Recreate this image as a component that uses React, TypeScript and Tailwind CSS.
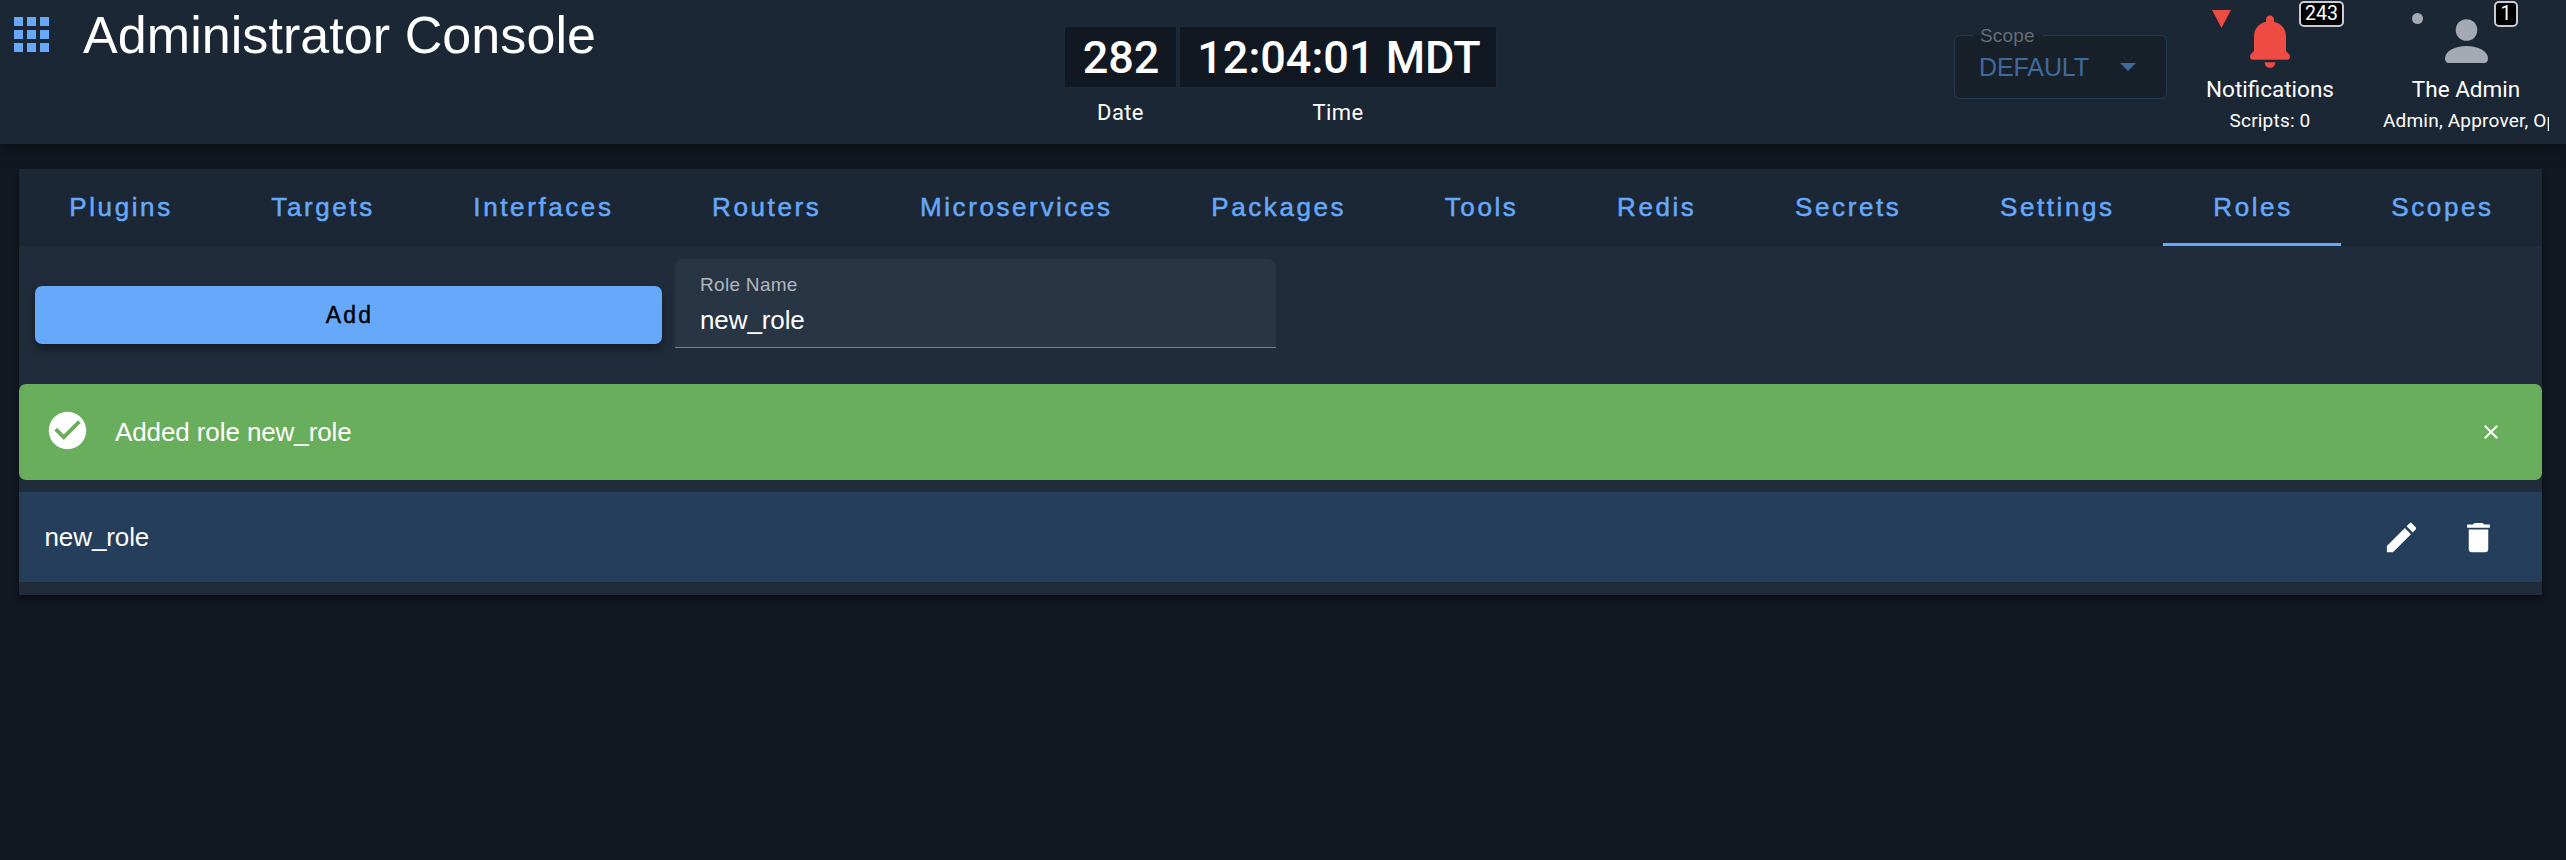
import React from "react";

const tabs = [
  "Plugins", "Targets", "Interfaces", "Routers", "Microservices", "Packages",
  "Tools", "Redis", "Secrets", "Settings", "Roles", "Scopes",
];

function AppsIcon() {
  return (
    <svg className="block h-[35px] w-[35px]" viewBox="0 0 35 35" fill="#66a9fb">
      {[0, 13, 26].map((y) =>
        [0, 13, 26].map((x) => <rect key={`${x}-${y}`} x={x} y={y} width="9" height="9" />)
      )}
    </svg>
  );
}

function Mdi({ d, className }: { d: string; className: string }) {
  return (
    <svg className={className} viewBox="0 0 24 24" fill="currentColor">
      <path d={d} />
    </svg>
  );
}

function Clock() {
  return (
    <div className="ml-[469px] mt-[26px] flex gap-[2px] font-['Roboto',sans-serif] text-white">
      <div className="flex w-[113px] flex-col items-center">
        <div className="flex h-[62px] w-full items-center justify-center border border-[#1b2a38] bg-[#121821] pl-px text-[45px] font-medium leading-none">282</div>
        <div className="mt-[12px] text-[22px] leading-[26px] tracking-[0.4px]">Date</div>
      </div>
      <div className="flex w-[318px] flex-col items-center">
        <div className="flex h-[62px] w-full items-center justify-center border border-[#1b2a38] bg-[#121821] pl-[2px] text-[45px] font-medium leading-none">12:04:01 MDT</div>
        <div className="mt-[12px] text-[22px] leading-[26px] tracking-[0.4px]">Time</div>
      </div>
    </div>
  );
}

function ScopeSelect() {
  return (
    <div className="relative ml-[457px] mt-[35px] flex h-[64px] w-[213px] items-center rounded-[6px] border border-[#243a54] bg-[#18212a] pl-[24px]">
      <span className="absolute left-[18px] top-[-12px] w-[70px] bg-[linear-gradient(#1b2734_11px,#18212a_11px)] pl-[7px] text-[19px] leading-[24px] tracking-[0.2px] text-[#666d75]">Scope</span>
      <span className="w-[141px] text-[25px] leading-[30px] tracking-[-0.1px] text-[#40699d]">DEFAULT</span>
      <svg className="h-[8px] w-[16px]" viewBox="0 0 16 8" fill="#40699d"><path d="M0 0h16l-8 8z" /></svg>
    </div>
  );
}

function Header() {
  return (
    <header className="relative z-10 flex h-[144px] items-start overflow-visible bg-[#1b2734] shadow-[0_4px_16px_rgba(0,0,0,0.4)]">
      <div className="ml-[14px] mt-[17px]"><AppsIcon /></div>
      <h1 className="ml-[34px] mt-[5px] w-[512px] whitespace-nowrap text-[52px] leading-[60px] tracking-[0.07px] text-white">Administrator Console</h1>
      <Clock />
      <ScopeSelect />
      <div className="relative ml-[31px] flex w-[144px] flex-col items-center font-['Roboto',sans-serif] text-white">
        <svg className="absolute left-[14px] top-[10px] h-[18px] w-[19px]" viewBox="0 0 19 18" fill="#ee4b42"><path d="M0 0h19L9.500 18z" /></svg>
        <svg className="mt-[15px] block h-[53px] w-[40px]" viewBox="0 0 40 53" fill="#ee4b42">
          <path d="M20 .5c2.300 0 4 1.800 4 4v2.300C31.500 8.500 36 14 36 21.500V36l3.400 3.600C40.600 41.500 40 44.700 37.500 44.700h-35C0 44.700-.6 41.500.6 39.600L4 36V21.500C4 14 8.500 8.500 16 6.800V4.500c0-2.200 1.700-4 4-4z" />
          <path d="M14.700 47.200h10.600c0 3.200-2.200 5.600-5.300 5.600s-5.300-2.400-5.300-5.600z" />
        </svg>
        <span className="absolute left-[101px] top-px flex h-[26px] w-[45px] items-center justify-center rounded-[5px] border-2 border-[#c9cbce] bg-black text-[19.5px] leading-none">243</span>
        <div className="mt-[7px] whitespace-nowrap text-[22.5px] leading-[28px]">Notifications</div>
        <div className="mt-[6px] whitespace-nowrap text-[19px] leading-[24px] tracking-[0.2px]">Scripts: 0</div>
      </div>
      <div className="relative ml-[41px] flex w-[166px] flex-col items-center font-['Roboto',sans-serif] text-white">
        <svg className="absolute left-[29px] top-[13px] h-[11px] w-[11px]" viewBox="0 0 12 12" fill="#a4a9b4"><circle cx="6" cy="6" r="6" /></svg>
        <svg className="mt-[19px] block h-[44px] w-[43px]" viewBox="0 0 43 44" fill="#a4a9b4">
          <circle cx="21.500" cy="11" r="10.800" />
          <path d="M0 39.500C0 32 10 27 21.500 27S43 32 43 39.500c0 2-1.200 4.500-3 4.500H3c-1.800 0-3-2.500-3-4.500z" />
        </svg>
        <span className="absolute left-[111px] top-px flex h-[26px] w-[24px] items-center justify-center rounded-[5px] border-2 border-[#c9cbce] bg-black text-[19.5px] leading-none">1</span>
        <div className="mt-[12px] whitespace-nowrap text-[22.5px] leading-[28px]">The Admin</div>
        <div className="mt-[6px] w-full overflow-hidden whitespace-nowrap text-[19px] leading-[24px] tracking-[0.2px]">Admin, Approver, Operator</div>
      </div>
    </header>
  );
}

export default function App() {
  return (
    <div className="h-[860px] w-full overflow-hidden bg-[#121821] font-['Liberation_Sans',Arial,sans-serif]">
      <Header />
      <main className="ml-[19px] mt-[25px] h-[426px] w-[2523px] bg-[#202c3b] shadow-[0_4px_5px_rgba(0,0,0,0.45)]">
        <nav className="flex h-[77px] bg-[#1b2734]">
          {tabs.map((t) => (
            <button
              key={t}
              className={
                "flex flex-auto items-center justify-center border-b-[3px] pl-[2px] pt-px text-[26px] leading-none tracking-[2.6px] text-[#66a9fb] [-webkit-text-stroke:0.5px_#66a9fb] " +
                (t === "Roles" ? "border-[#66a9fb]" : "border-transparent")
              }
            >
              {t}
            </button>
          ))}
        </nav>
        <div className="flex h-[138px] items-start">
          <button className="ml-[16px] mt-[40px] flex h-[58px] w-[627px] items-center justify-center rounded-[7px] bg-[#66a9fb] pl-[2px] pt-px text-[23px] tracking-[2.2px] text-black shadow-[0_5px_10px_rgba(0,0,0,0.4)] [-webkit-text-stroke:0.4px_black]">Add</button>
          <label className="ml-[13px] mt-[13px] flex h-[89px] w-[601px] flex-col rounded-t-[8px] border-b border-[#718489] bg-[#283545] pl-[25px] pt-[14px]">
            <span className="text-[19px] leading-[24px] tracking-[0.3px] text-[#b3b7bc]">Role Name</span>
            <span className="mt-[8px] text-[26px] leading-[30px] tracking-[-0.1px] text-white">new_role</span>
          </label>
        </div>
        <div className="flex h-[96px] items-center rounded-[7px] bg-[#69ae5d] text-white">
          <Mdi className="ml-[26px] mt-[-4px] h-[45px] w-[45px]" d="M12 2C6.500 2 2 6.500 2 12S6.500 22 12 22 22 17.500 22 12 17.500 2 12 2M10 17L5 12L6.410 10.590L10 14.170L17.590 6.580L19 8L10 17Z" />
          <span className="ml-[25px] flex-1 text-[26px] leading-[30px] tracking-[-0.1px]">Added role new_role</span>
          <Mdi className="mr-[39px] h-[24px] w-[24px]" d="M19 6.410L17.590 5L12 10.590L6.410 5L5 6.410L10.590 12L5 17.590L6.410 19L12 13.410L17.590 19L19 17.590L13.410 12Z" />
        </div>
        <div className="mt-[12px] flex h-[90px] items-center bg-[#253e5b] text-white">
          <span className="ml-[25.5px] flex-1 text-[26px] leading-[30px] tracking-[-0.1px]">new_role</span>
          <Mdi className="h-[39px] w-[39px]" d="M20.710 7.040C21.100 6.650 21.100 6 20.710 5.630L18.370 3.290C18 2.900 17.350 2.900 16.960 3.290L15.120 5.120L18.870 8.870M3 17.250V21H6.750L17.810 9.930L14.060 6.180L3 17.250Z" />
          <Mdi className="ml-[38px] mr-[44px] h-[39px] w-[39px]" d="M19 4H15.500L14.500 3H9.500L8.500 4H5V6H19M6 19A2 2 0 0 0 8 21H16A2 2 0 0 0 18 19V7H6V19Z" />
        </div>
      </main>
    </div>
  );
}
